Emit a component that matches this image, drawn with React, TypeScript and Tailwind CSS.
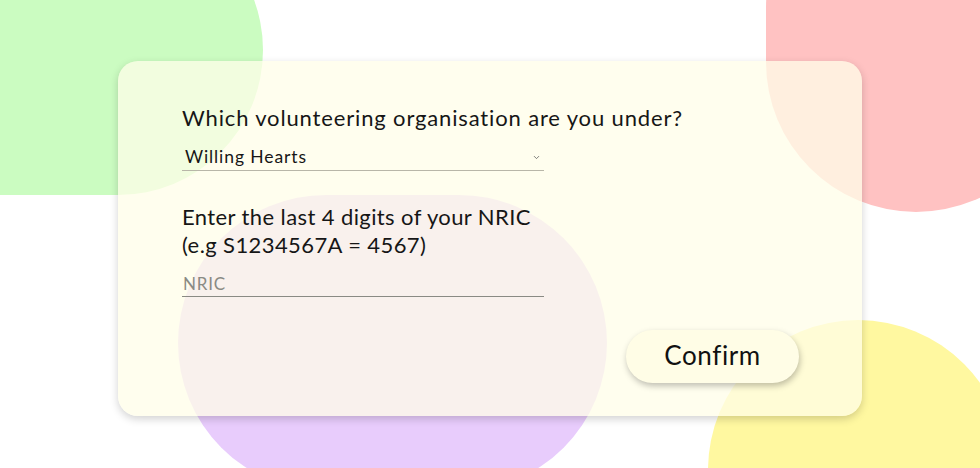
import { ChevronDown } from "lucide-react"

export default function App() {
  return (
    <div className="relative w-[980px] h-[468px] overflow-hidden bg-white font-['Lato',_'Liberation_Sans',_sans-serif] text-[#161616]">
      {/* background blobs */}
      <div className="absolute left-[-173px] top-[-95px] w-[436px] h-[290px] rounded-full bg-[#cbfcc1]" />
      <div className="absolute left-[766px] top-[-142px] w-[300px] h-[354px] rounded-full bg-[#ffc2c2]" />
      <div className="absolute left-[178px] top-[195px] w-[429px] h-[296px] rounded-full bg-[#e8ccfc]" />
      <div className="absolute left-[708px] top-[320px] w-[300px] h-[320px] rounded-full bg-[#fff8a0]" />

      <div className="relative flex justify-center pt-[61px]">
        <div className="w-[744px] h-[355px] rounded-[20px] bg-[#fffde8]/75 shadow-[0_3px_8px_rgba(0,0,0,0.18)] flex flex-col pl-16 pr-[63px] pt-[42px]">
          <h2 className="text-[22px] leading-[30px] tracking-[0.85px]">Which volunteering organisation are you under?</h2>
          <div className="mt-3 w-[362px] h-[26px] border-b border-[#b8b6a8] flex items-center justify-between pl-[3px] pr-[3px]">
            <span className="text-[17.5px] tracking-[0.9px]">Willing Hearts</span>
            <ChevronDown className="w-[9px] h-[9px] text-[#555]" strokeWidth={2} />
          </div>

          <p className="mt-8 text-[22px] leading-[28px] tracking-[0.4px]">
            Enter the last 4 digits of your NRIC
            <br />
            (e.g S1234567A = 4567)
          </p>
          <input
            placeholder="NRIC"
            className="mt-[11px] w-[362px] h-[27px] bg-transparent border-b border-[#8a8a84] pl-[1px] text-[17px] tracking-[0.8px] outline-none placeholder:text-[#8a8a84]"
          />

          <div className="flex justify-end mt-[33px]">
            <button className="w-[173px] h-[53px] rounded-full bg-[#fffde6] shadow-[1px_3px_6px_rgba(0,0,0,0.25)] pb-[3px] text-[26px] tracking-[0.6px] text-[#111]">
              Confirm
            </button>
          </div>
        </div>
      </div>
    </div>
  )
}
